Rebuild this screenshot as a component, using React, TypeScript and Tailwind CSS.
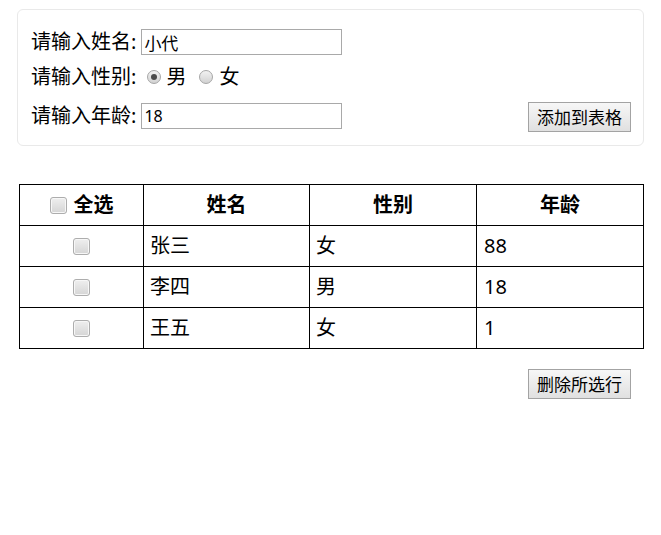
import { useState } from "react";

type Person = { id: number; name: string; sex: string; age: string };

const INITIAL: Person[] = [
  { id: 1, name: "张三", sex: "女", age: "88" },
  { id: 2, name: "李四", sex: "男", age: "18" },
  { id: 3, name: "王五", sex: "女", age: "1" },
];

const FONT = "font-['Noto_Sans','Noto_Sans_CJK_SC',sans-serif]";

function Check({ checked, onChange }: { checked: boolean; onChange: () => void }) {
  return (
    <button
      type="button"
      onClick={onChange}
      className="relative inline-block h-[17px] w-[17px] shrink-0 rounded-[3px] border border-[#adadad] bg-gradient-to-b from-[#efefef] to-[#d5d5d5] shadow-[inset_0_0_0_1px_#f7f7f7]"
    >
      {checked && (
        <svg viewBox="0 0 16 16" className="absolute inset-0 h-full w-full">
          <path d="M3.5 8.5l3 3 6-7" fill="none" stroke="#333" strokeWidth="2" />
        </svg>
      )}
    </button>
  );
}

function Radio({ checked, onClick }: { checked: boolean; onClick: () => void }) {
  return (
    <button
      type="button"
      onClick={onClick}
      className="flex h-[14px] w-[14px] items-center justify-center rounded-full border border-[#a6a6a6] bg-gradient-to-b from-[#f2f2f2] to-[#d2d2d2]"
    >
      {checked && <span className="h-[6px] w-[6px] rounded-full bg-[#4a4a4a]" />}
    </button>
  );
}

function OldButton({ children, onClick }: { children: string; onClick: () => void }) {
  return (
    <button
      type="button"
      onClick={onClick}
      className="h-[30px] w-[103px] border border-[#a3a3a3] bg-gradient-to-b from-[#f7f7f7] to-[#e0e0e0] text-[17px] leading-none text-black"
    >
      {children}
    </button>
  );
}

export default function App() {
  const [name, setName] = useState("小代");
  const [sex, setSex] = useState("男");
  const [age, setAge] = useState("18");
  const [rows, setRows] = useState<Person[]>(INITIAL);
  const [selected, setSelected] = useState<number[]>([]);

  const allChecked = rows.length > 0 && selected.length === rows.length;

  const add = () => {
    setRows([...rows, { id: Date.now(), name, sex, age }]);
  };

  const toggle = (id: number) => {
    setSelected(selected.includes(id) ? selected.filter((s) => s !== id) : [...selected, id]);
  };

  const removeSelected = () => {
    setRows(rows.filter((r) => !selected.includes(r.id)));
    setSelected([]);
  };

  return (
    <div className={`min-h-[535px] bg-white text-black ${FONT}`}>
      {/* form panel */}
      <div className="mx-[17px] pt-[9px]">
        <div className="rounded-[6px] border border-[#e9e9e9] pb-[13px] pl-[13px] pr-[12px] pt-[19px]">
          <div className="flex h-[26px] items-center">
            <span className="text-[20px] leading-none">请输入姓名:</span>
            <input
              value={name}
              onChange={(e) => setName(e.target.value)}
              className="ml-[5px] h-[26px] w-[201px] border border-[#a9a9a9] px-[2px] text-[17px] outline-none"
            />
          </div>
          <div className="mt-[9px] flex h-[26px] items-center">
            <span className="text-[20px] leading-none">请输入性别:</span>
            <span className="ml-[11px] flex">
              <Radio checked={sex === "男"} onClick={() => setSex("男")} />
            </span>
            <span className="ml-[5px] text-[20px] leading-none">男</span>
            <span className="ml-[13px] flex">
              <Radio checked={sex === "女"} onClick={() => setSex("女")} />
            </span>
            <span className="ml-[6px] text-[20px] leading-none">女</span>
          </div>
          <div className="mt-[12px] flex h-[30px] items-end justify-between">
            <div className="mb-[3px] flex h-[26px] items-center">
              <span className="text-[20px] leading-none">请输入年龄:</span>
              <input
                value={age}
                onChange={(e) => setAge(e.target.value)}
                className="ml-[5px] h-[26px] w-[201px] border border-[#a9a9a9] px-[2px] text-[16px] outline-none"
              />
            </div>
            <OldButton onClick={add}>添加到表格</OldButton>
          </div>
        </div>
      </div>

      {/* table */}
      <div className="ml-[19px] mr-[18px] mt-[38px]">
        <table className="w-[624px] table-fixed border-collapse text-[20px]">
          <colgroup>
            <col className="w-[124px]" />
            <col className="w-[166px]" />
            <col className="w-[167px]" />
            <col className="w-[167px]" />
          </colgroup>
          <thead>
            <tr className="h-[41px]">
              <th className="border border-black font-bold">
                <div className="flex items-center justify-center gap-[7px]">
                  <Check
                    checked={allChecked}
                    onChange={() => setSelected(allChecked ? [] : rows.map((r) => r.id))}
                  />
                  <span>全选</span>
                </div>
              </th>
              <th className="border border-black font-bold">姓名</th>
              <th className="border border-black font-bold">性别</th>
              <th className="border border-black font-bold">年龄</th>
            </tr>
          </thead>
          <tbody>
            {rows.map((r) => (
              <tr key={r.id} className="h-[41px]">
                <td className="border border-black">
                  <div className="flex items-center justify-center">
                    <Check checked={selected.includes(r.id)} onChange={() => toggle(r.id)} />
                  </div>
                </td>
                <td className="border border-black pl-[6px]">{r.name}</td>
                <td className="border border-black pl-[6px]">{r.sex}</td>
                <td className="border border-black pl-[7px]">{r.age}</td>
              </tr>
            ))}
          </tbody>
        </table>
        <div className="mr-[12px] mt-[20px] flex justify-end">
          <OldButton onClick={removeSelected}>删除所选行</OldButton>
        </div>
      </div>
    </div>
  );
}
